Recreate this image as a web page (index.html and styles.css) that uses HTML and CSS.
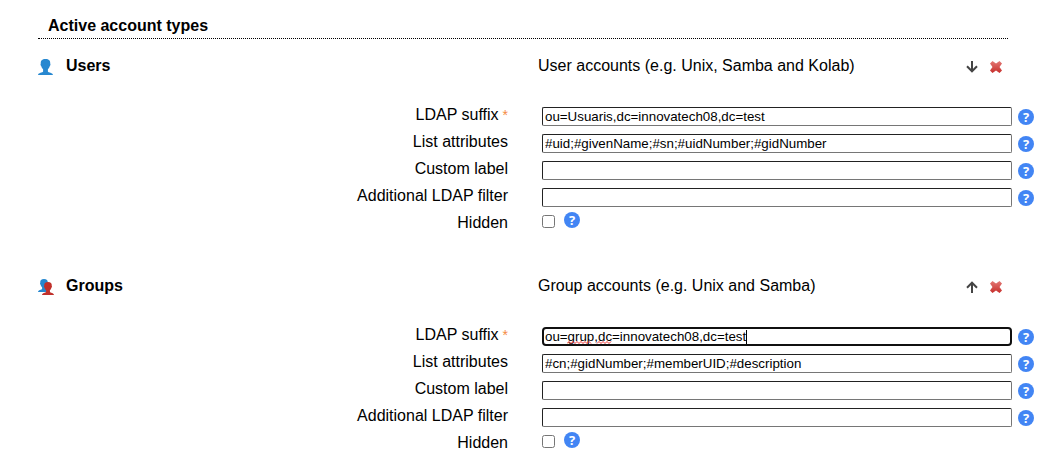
FILE: index.html
```html
<!DOCTYPE html>
<html lang="en">
<head>
<meta charset="utf-8">
<title>Active account types</title>
<link rel="stylesheet" href="styles.css">
</head>
<body>
<svg class="sprite" aria-hidden="true">
  <symbol id="person" viewBox="0 0 15 16"><path d="M7.500 0C4 0 2.600 1.600 2.800 4.600c-.5.5-.3 2 .4 2.400.4 1.400.9 2.400 1.900 3.200v2.200C4.600 13.600.3 13.400 0 16h15c-.3-2.600-4.600-2.400-5.100-3.600v-2.200c1-.8 1.500-1.800 1.900-3.200.7-.4.9-1.900.4-2.400C12.400 1.600 11 0 7.500 0z"/></symbol>
  <symbol id="down" viewBox="0 0 12 12"><path d="M6 0v10M1 5.300l5 5 5-5" fill="none" stroke="#444" stroke-width="2"/></symbol>
  <symbol id="up" viewBox="0 0 12 12"><path d="M6 12V2M1 6.700l5-5 5 5" fill="none" stroke="#444" stroke-width="2"/></symbol>
  <symbol id="cross" viewBox="0 0 12 12"><linearGradient id="red" x2="0" y2="1"><stop stop-color="#e37975"/><stop offset="1" stop-color="#c72e2b"/></linearGradient><path d="M2.500 0 6 2.500 9.500 0 12 2.500 9.500 6 12 9.500 9.500 12 6 9.500 2.500 12 0 9.500 2.500 6 0 2.500z" fill="url(#red)"/></symbol>
</svg>
<main class="page">
  <h1 class="title">Active account types</h1>

  <section class="account">
    <div class="account-head">
      <h2 class="name"><svg class="type-icon"><use href="#person" x="0" y="0" width="15" height="16" fill="#2788d0"/></svg>Users</h2>
      <div class="summary"><span>User accounts (e.g. Unix, Samba and Kolab)</span>
        <span class="actions"><button class="icon-button" aria-label="Move down"><svg class="action-icon"><use href="#down"/></svg></button><button class="icon-button" aria-label="Delete"><svg class="action-icon"><use href="#cross"/></svg></button></span></div>
    </div>
    <div class="fields">
      <label class="label" for="u1">LDAP suffix<span class="required">*</span></label><div class="control"><input class="text" id="u1" value="ou=Usuaris,dc=innovatech08,dc=test"></div><button class="help">?</button>
      <label class="label" for="u2">List attributes</label><div class="control"><input class="text" id="u2" value="#uid;#givenName;#sn;#uidNumber;#gidNumber"></div><button class="help">?</button>
      <label class="label" for="u3">Custom label</label><div class="control"><input class="text" id="u3"></div><button class="help">?</button>
      <label class="label" for="u4">Additional LDAP filter</label><div class="control"><input class="text" id="u4"></div><button class="help">?</button>
      <label class="label" for="u5">Hidden</label><div class="check"><input class="box" type="checkbox" id="u5"><button class="help">?</button></div>
    </div>
  </section>

  <section class="account">
    <div class="account-head">
      <h2 class="name"><svg class="type-icon"><use href="#person" x="0" y="0" width="12" height="13" fill="#2788d0"/><use href="#person" x="4" y="3" width="12" height="13" fill="#c0302b"/></svg>Groups</h2>
      <div class="summary"><span>Group accounts (e.g. Unix and Samba)</span>
        <span class="actions"><button class="icon-button" aria-label="Move up"><svg class="action-icon"><use href="#up"/></svg></button><button class="icon-button" aria-label="Delete"><svg class="action-icon"><use href="#cross"/></svg></button></span></div>
    </div>
    <div class="fields">
      <label class="label" for="g1">LDAP suffix<span class="required">*</span></label><div class="control"><input class="text active" id="g1" value="ou=grup,dc=innovatech08,dc=test" spellcheck="false"><svg class="spelling" viewBox="0 0 45 3" aria-hidden="true"><path d="M0 2.500l2-2 2 2 2-2 2 2 2-2 2 2 2-2 2 2 2-2 2 2 2-2 2 2M30 2.500l2-2 2 2 2-2 2 2 2-2 2 2 2-2" fill="none" stroke="#e33"/></svg><span class="caret"></span></div><button class="help">?</button>
      <label class="label" for="g2">List attributes</label><div class="control"><input class="text" id="g2" value="#cn;#gidNumber;#memberUID;#description"></div><button class="help">?</button>
      <label class="label" for="g3">Custom label</label><div class="control"><input class="text" id="g3"></div><button class="help">?</button>
      <label class="label" for="g4">Additional LDAP filter</label><div class="control"><input class="text" id="g4"></div><button class="help">?</button>
      <label class="label" for="g5">Hidden</label><div class="check"><input class="box" type="checkbox" id="g5"><button class="help">?</button></div>
    </div>
  </section>
</main>
</body>
</html>
```
FILE: styles.css
```css
* { box-sizing: border-box; }
body {
  margin: 0;
  background: #fff;
  color: #000;
  font: 16px/18px "Liberation Sans", Arial, sans-serif;
}
.sprite { position: absolute; width: 0; height: 0; }
.page { padding: 17px 22px 0 38px; }
.title {
  margin: 0 26px 0 0;
  padding: 0 0 3px 10px;
  border-bottom: 1px dotted #000;
  font-size: 16px;
  line-height: 18px;
}
.account { padding-top: 18px; }
.account + .account { padding-top: 39px; }
.account-head {
  display: grid;
  grid-template-columns: 1fr 1fr;
  gap: 4px;
}
.name {
  display: flex;
  gap: 12px;
  height: 18px;
  margin: 0;
  font-size: 16px;
  line-height: 18px;
}
.type-icon { width: 16px; height: 16px; margin-top: 2px; }
.summary {
  display: flex;
  justify-content: space-between;
  height: 18px;
  padding-right: 32px;
}
.actions { display: flex; gap: 12px; padding-top: 4px; }
.icon-button {
  width: 12px;
  height: 12px;
  padding: 0;
  border: 0;
  background: none;
}
.action-icon { display: block; width: 12px; height: 12px; }
.fields {
  display: grid;
  grid-template-columns: minmax(0, 1fr) 22px minmax(0, 1fr) 16px;
  grid-auto-rows: 27px;
  column-gap: 6px;
  padding-top: 28px;
}
.label { grid-column: 1; padding-top: 3px; text-align: right; }
.required {
  padding-left: 4px;
  color: #f58b45;
  font-size: 14px;
}
.control {
  position: relative;
  grid-column: 3;
  padding-top: 4px;
}
.text {
  display: block;
  width: 100%;
  height: 19px;
  padding: 0 2px 1px;
  border: 1px solid #767676;
  border-top-color: #222;
  border-left-color: #222;
  border-radius: 2px;
  background: #fff;
  color: #000;
  font-family: "Liberation Sans", Arial, sans-serif;
}
.active {
  border: 2px solid #101010;
  border-radius: 4px;
  padding: 0 1px;
}
.spelling {
  position: absolute;
  top: 18px;
  left: 25px;
  width: 45px;
  height: 3px;
}
.caret {
  position: absolute;
  top: 7px;
  left: 204px;
  width: 1px;
  height: 14px;
  background: #000;
}
.help {
  width: 16px;
  height: 16px;
  margin: 6px 0 0;
  padding: 0;
  border: 0;
  border-radius: 50%;
  background: #4285f4;
  color: #fff;
  font: bold 13px/16px "Open Sans", sans-serif;
}
.check {
  grid-column: 3;
  display: flex;
  gap: 9px;
}
.box { width: 13px; height: 13px; margin: 4px 0 0; }
.check .help { margin-top: 1px; }
```
